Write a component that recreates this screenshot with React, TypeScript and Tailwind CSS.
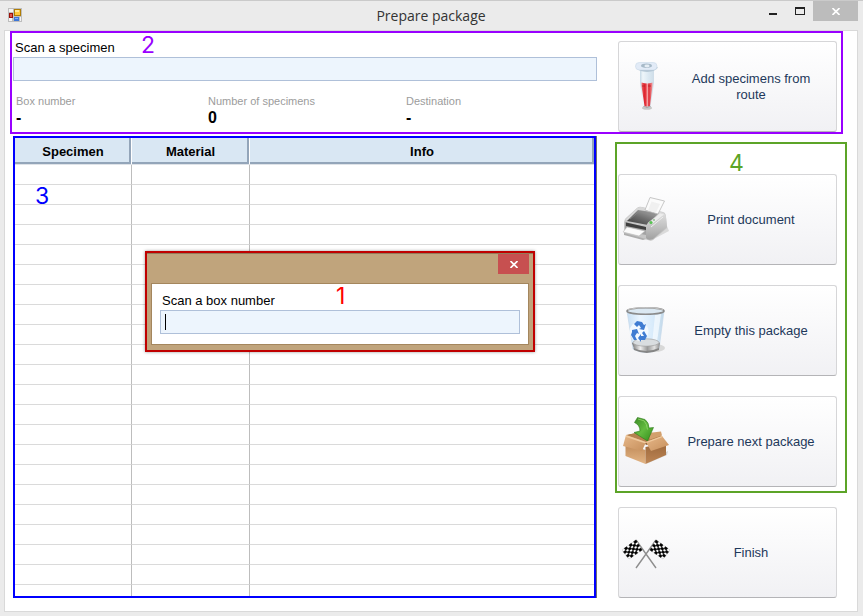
import type { ReactNode } from "react";

const ROWS = Array.from({ length: 21 }, (_, i) => i);

function FormIcon() {
  return (
    <svg width="14" height="14" viewBox="0 0 14 14" aria-hidden="true">
      <rect width="14" height="14" fill="#bdbdbd" />
      <rect x="1" y="1" width="4" height="3" fill="#f3f3f3" />
      <rect x="1" y="10" width="3" height="3" fill="#f6f6f6" />
      <rect x="12" y="9" width="1" height="4" fill="#f3f3f3" />
      <rect x="6.5" y="1.5" width="6" height="6" fill="#fdc93b" stroke="#b07d05" />
      <rect x="7" y="2" width="4" height="2" fill="#ffe79a" />
      <rect x="1.5" y="5.5" width="3" height="4" fill="#e2574c" stroke="#9b1109" />
      <rect x="6" y="9" width="5" height="4" fill="#3c76d8" />
      <rect x="7" y="10" width="3" height="1" fill="#86b0f5" />
    </svg>
  );
}

function TubeIcon() {
  return (
    <svg width="48" height="49" viewBox="0 0 48 49" className="shrink-0" aria-hidden="true">
      <defs>
        <linearGradient id="tubeGlass">
          <stop offset="0" stopColor="#c6d9e5" />
          <stop offset=".2" stopColor="#eef6fa" />
          <stop offset=".6" stopColor="#dbe9f2" />
          <stop offset="1" stopColor="#cfdde8" />
        </linearGradient>
        <linearGradient id="tubeRed">
          <stop offset="0" stopColor="#ee7474" />
          <stop offset=".25" stopColor="#de2530" />
          <stop offset=".42" stopColor="#e53a42" />
          <stop offset=".52" stopColor="#f9b9b9" />
          <stop offset=".66" stopColor="#dd2a34" />
          <stop offset="1" stopColor="#f09a9a" />
        </linearGradient>
      </defs>
      <ellipse cx="25" cy="46" rx="5" ry="1.8" fill="#c6c6c6" />
      <path d="M18 8h14v13l-3.500 24q-3.500 2-7 0L18 21z" fill="url(#tubeGlass)" />
      <path d="M19.500 20.500q6 2 11 0v3l-2.500 20.500q-3 1.500-5.500 0L19.500 24z" fill="url(#tubeRed)" />
      <path d="M21.500 44.500q3.500 1.800 7 0" fill="none" stroke="#999" />
      <path d="M20 24h3m3 0h3" stroke="#b51f27" strokeWidth=".8" />
      <path d="M14 5q0 2 5 4 6 1.500 12 0 5-2 4.500-4z" fill="#a9bdcc" />
      <rect x="13.500" y="0.500" width="21.500" height="7.500" rx="3.700" fill="#e2ebf7" stroke="#cfdce9" strokeWidth=".7" />
      <ellipse cx="24.500" cy="3.700" rx="5.500" ry="2.300" fill="#a7bac8" />
      <ellipse cx="25" cy="4" rx="2.600" ry="1.400" fill="#e5edf4" />
    </svg>
  );
}

function PrinterIcon() {
  return (
    <svg width="48" height="49" viewBox="0 0 48 49" className="shrink-0" aria-hidden="true">
      <defs>
        <linearGradient id="prTray" x1="0" y1="1" x2=".8" y2="0">
          <stop offset="0" stopColor="#3a3a3a" />
          <stop offset=".5" stopColor="#6c6c6c" />
          <stop offset="1" stopColor="#a9a9a9" />
        </linearGradient>
        <linearGradient id="prSide" x2="0" y2="1">
          <stop offset="0" stopColor="#dedede" />
          <stop offset=".5" stopColor="#c2c2c2" />
          <stop offset="1" stopColor="#a0a0a0" />
        </linearGradient>
      </defs>
      <path d="M28 46l19-10-2-5-17 8z" fill="#dadada" />
      <path d="M2 27q0-3 3-5l10-9q2-2 5-1l21 5q3 1 3 5l1 11-14 12q-2 1-5 0L2 39z" fill="#c6c6c6" />
      <path d="M3 25l12-12q2-1 4-1l24 6-14 10z" fill="#d8d8d8" />
      <path d="M5 26L16 15l21 3-11 12z" fill="url(#prTray)" />
      <path d="M8 24L17 16.500l16 3" fill="none" stroke="#8b8b8b" strokeWidth=".7" />
      <path d="M23 15L28 2.500 42.500 6 36 19z" fill="#fbfbfb" stroke="#b9b9b9" strokeWidth=".8" />
      <path d="M26 15.500l3.500-9L38 9l-4 8.500z" fill="#f0f0f0" />
      <path d="M24 35q0-7 4-9l10-8q6 0 6 4l1 10-14 12q-5 2-7-1z" fill="url(#prSide)" />
      <path d="M27 28l11-9.500 4 1L30 29z" fill="#ececec" />
      <path d="M29 32l12-10" stroke="#eee" />
      <path d="M3 27l21 5v8L3 36z" fill="#a3a3a3" />
      <path d="M4 27.500L24 32v3L4 31z" fill="#3f3f3f" />
      <path d="M5 32l18 4-6 5L1 37z" fill="#fbfbfb" stroke="#b3b3b3" strokeWidth=".5" />
      <path d="M2 38l22 6-3 1L2 40z" fill="#adadad" />
      <circle cx="29" cy="27.500" r="1.600" fill="#57c250" />
      <circle cx="32" cy="25" r=".9" fill="#86b986" />
    </svg>
  );
}

function BinIcon() {
  return (
    <svg width="48" height="49" viewBox="0 0 48 49" className="shrink-0" aria-hidden="true">
      <defs>
        <linearGradient id="binGlass">
          <stop offset="0" stopColor="#c8e0f5" />
          <stop offset=".35" stopColor="#eaf5ff" />
          <stop offset=".7" stopColor="#d8ebfb" />
          <stop offset="1" stopColor="#c2d8e9" />
        </linearGradient>
        <linearGradient id="binBase">
          <stop offset="0" stopColor="#777" />
          <stop offset=".3" stopColor="#eee" />
          <stop offset=".55" stopColor="#999" />
          <stop offset=".8" stopColor="#e1e1e1" />
          <stop offset="1" stopColor="#8b8b8b" />
        </linearGradient>
      </defs>
      <ellipse cx="33" cy="42" rx="10" ry="4" fill="#d8d8d8" />
      <path d="M5 5l6 38q13 7 26 0l5-38z" fill="url(#binGlass)" stroke="#c6d9e9" strokeWidth=".7" />
      <path d="M33 9l6-1-4 28-5 2z" fill="#f6fbff" opacity=".75" />
      <path d="M10 37q13-8 28 0l-1 6q-12 6-25 0z" fill="url(#binBase)" />
      <ellipse cx="24" cy="36.500" rx="13" ry="3.700" fill="#d9dde0" stroke="#999" strokeWidth=".6" />
      <path d="M11.500 42q12 6 25.500 0v2q-12 6-25 0z" fill="#858585" />
      <circle cx="17" cy="25.500" r="9.500" fill="#f4faff" opacity=".9" />
      <g fill="#3f7cd2">
        <path d="M12 18l3-3 5 1 2 3 2-1-2 6-5-1 2-1-2-3-2 2z" />
        <path d="M10 24l5-1 2 5-2-1-2 3 2 4h-3l-3-5 1-3z" />
        <path d="M22 25l3 5-2 4h-4v2l-3-4 3-4v2h3l-2-3z" />
      </g>
      <ellipse cx="23.500" cy="5" rx="18.500" ry="3.200" fill="#dbe8f2" stroke="#8b8b8b" strokeWidth="1.600" />
      <path d="M6 3.500q17-4 35 0" fill="none" stroke="#ddd" strokeWidth=".7" />
    </svg>
  );
}

function BoxIcon() {
  return (
    <svg width="48" height="49" viewBox="0 0 48 49" className="shrink-0" aria-hidden="true">
      <defs>
        <linearGradient id="boxLeft" x2="0" y2="1">
          <stop offset="0" stopColor="#c08a58" />
          <stop offset="1" stopColor="#e3b585" />
        </linearGradient>
        <linearGradient id="boxRight" x2="0" y2="1">
          <stop offset="0" stopColor="#9c673b" />
          <stop offset="1" stopColor="#bd8655" />
        </linearGradient>
        <linearGradient id="boxFlap" x2="1" y2="1">
          <stop offset="0" stopColor="#e6b788" />
          <stop offset="1" stopColor="#c68f5c" />
        </linearGradient>
        <linearGradient id="arrowGreen" x2="1" y2="1">
          <stop offset="0" stopColor="#3b8a26" />
          <stop offset=".5" stopColor="#63bb3f" />
          <stop offset="1" stopColor="#2f8a1a" />
        </linearGradient>
      </defs>
      <path d="M24 47l21-9 1-4-8 4z" fill="#d4d4d4" />
      <path d="M4 18.500l8-2 28 2.500-15 9z" fill="#8a5a31" />
      <path d="M4 18l10-2 26 3-2 4-14 3z" fill="#b5804f" />
      <path d="M26 16l13-1.500 1 4-12 4z" fill="#d3a06d" />
      <path d="M15.500 .500L23 2.500q4 3 4 8.500l4.500-.5L25.500 24 12 15.500l6-1.500q0-6-5.500-8.500z" fill="url(#arrowGreen)" stroke="#2b7a18" strokeWidth=".6" />
      <path d="M16 2l6 1.800q3 3 3.500 8.700" fill="none" stroke="#8fd26a" strokeWidth=".9" />
      <path d="M3.500 27l20 6v14l-20-8z" fill="url(#boxLeft)" />
      <path d="M23.500 30L44 26v12l-20.500 9z" fill="url(#boxRight)" />
      <path d="M4 18l20 7-4 9L1 29z" fill="url(#boxFlap)" />
      <path d="M4 18l20 7-.5 1.500L4 20z" fill="#efc99e" />
      <path d="M24 25l16-6 7 9-18 6z" fill="url(#boxFlap)" />
      <path d="M24 25l16-6 .8 1-16 6z" fill="#efc99e" />
    </svg>
  );
}

type Point = [number, number];

/* Splits a four-cornered flag into a 6 by 5 chequered grid. */
function checker([a, b, c, d]: Point[]) {
  const at = (u: number, v: number) =>
    [0, 1]
      .map((k) => (1 - u) * (1 - v) * a[k] + u * (1 - v) * b[k] + u * v * c[k] + (1 - u) * v * d[k])
      .join(",");
  const cells: string[] = [];
  for (let i = 0; i < 6; i++) {
    for (let j = 0; j < 5; j++) {
      if ((i + j) % 2 === 0) {
        cells.push([at(i / 6, j / 5), at((i + 1) / 6, j / 5), at((i + 1) / 6, (j + 1) / 5), at(i / 6, (j + 1) / 5)].join(" "));
      }
    }
  }
  return cells;
}

function FlagsIcon() {
  const left: Point[] = [[14, 12], [0, 22], [7, 31], [20, 22]];
  const right: Point[] = [[34, 12], [48, 22], [41, 31], [28, 22]];
  return (
    <svg width="48" height="49" viewBox="0 0 48 49" className="shrink-0" aria-hidden="true">
      <path d="M14 12l20 28M34 12L14 40" stroke="#8e8e8e" strokeWidth="1.400" />
      {[left, right].map((flag, i) => (
        <g key={i}>
          <polygon points={flag.map((p) => p.join(",")).join(" ")} fill="#fff" stroke="#aaa" strokeWidth=".4" />
          {checker(flag).map((points) => (
            <polygon key={points} points={points} fill="#000" stroke="#000" strokeWidth=".5" />
          ))}
        </g>
      ))}
    </svg>
  );
}

function ActionButton({ icon, children }: { icon: ReactNode; children: ReactNode }) {
  return (
    <button
      type="button"
      className="flex h-[91px] w-full items-center rounded-[3px] border border-[#d6d6d8] border-b-[#b4b4b7] bg-linear-to-b from-white to-[#f1f1f4] pr-1 pl-[3px] text-[13px] leading-4 text-[#1e395b]"
    >
      {icon}
      <span className="flex-1 px-4">{children}</span>
    </button>
  );
}

function Mark({ className, children }: { className: string; children: ReactNode }) {
  return (
    <span className={`pointer-events-none absolute font-['Inter',sans-serif] text-[23px] leading-6 font-normal ${className}`}>
      {children}
    </span>
  );
}

function Stat({ label, value, className }: { label: string; value: string; className: string }) {
  return (
    <div className={className}>
      <dt className="text-[11px] leading-4 text-[#9c9c9c]">{label}</dt>
      <dd className="text-base leading-[18px] font-bold">{value}</dd>
    </div>
  );
}

function ColumnHead({ className, children }: { className: string; children: ReactNode }) {
  return (
    <th className={`h-[27px] border-b border-[#dfe3e8] p-0 ${className}`}>
      <div className="h-[26px] border-r-2 border-b-2 border-[#93a5b9] bg-[#d9e7f3] pl-[2px] text-[13px] leading-7">
        {children}
      </div>
    </th>
  );
}

export default function App() {
  return (
    <div className="relative flex min-h-screen flex-col border-t border-[#cacaca] bg-[#ebebeb] pb-1 font-['Liberation_Sans',Arial,sans-serif] text-black">
      <header className="grid h-[29px] shrink-0 grid-cols-[1fr_auto_1fr] items-start pr-[5px] pl-1">
        <div className="pt-[7px] pl-1">
          <FormIcon />
        </div>
        <h1 className="font-['Open_Sans',sans-serif] text-[14px] leading-[30px] text-[#333]">Prepare package</h1>
        <div className="flex justify-end">
          <button type="button" aria-label="Minimize" className="flex h-5 w-7 items-center justify-center pt-[6px]">
            <span className="h-[2px] w-2 bg-[#222]" />
          </button>
          <button type="button" aria-label="Maximize" className="flex h-5 w-[26px] items-center justify-center">
            <span className="h-2 w-[10px] border border-t-2 border-[#222]" />
          </button>
          <button type="button" aria-label="Close" className="flex h-5 w-[45px] items-center justify-center bg-[#bcbcbc]">
            <svg width="8" height="7" viewBox="0 0 8 7" aria-hidden="true">
              <path d="M.5 0l7 7M7.500 0l-7 7" stroke="#fff" strokeWidth="1.600" />
            </svg>
          </button>
        </div>
      </header>

      <main className="mr-[5px] ml-1 flex flex-1 flex-col border border-[#d9d9d9] bg-white">
        <section className="relative mr-[14px] ml-[5px] flex h-[103px] border-2 border-[#9900ff]">
          <Mark className="top-0 left-[129px] text-[#9900ff]">2</Mark>
          <div className="mr-[21px] flex-1 pl-px">
            <label htmlFor="specimen" className="mt-[6px] block h-[18px] pl-[2px] text-[13px] leading-[18px]">
              Scan a specimen
            </label>
            <input id="specimen" type="text" className="block h-6 w-full border border-[#afc0d9] bg-[#edf5fd] px-1 text-[13px] outline-none" />
            <dl className="mt-3 flex pl-[3px]">
              <Stat label="Box number" value="-" className="w-[192px]" />
              <Stat label="Number of specimens" value="0" className="w-[198px]" />
              <Stat label="Destination" value="-" className="flex-1" />
            </dl>
          </div>
          <div className="mr-1 w-[219px] pt-2">
            <ActionButton icon={<TubeIcon />}>Add specimens from route</ActionButton>
          </div>
        </section>

        <div className="mt-[2px] flex flex-1 pr-[10px] pb-[13px] pl-2">
          <section className="relative mr-[19px] flex flex-1 flex-col border-2 border-[#0000ff] shadow-[1px_0_0_#707070]">
            <Mark className="top-[46px] left-[20px] text-[#0000ff]">3</Mark>
            <table className="w-full table-fixed border-separate border-spacing-0">
              <thead>
                <tr>
                  <ColumnHead className="w-[117px] pr-px">Specimen</ColumnHead>
                  <ColumnHead className="w-[118px] pr-px">Material</ColumnHead>
                  <ColumnHead className="">Info</ColumnHead>
                </tr>
              </thead>
              <tbody>
                {ROWS.map((row) => (
                  <tr key={row} className="h-5">
                    <td className="border-r border-b border-r-[#bdbdbd] border-b-[#dadada] p-0" />
                    <td className="border-r border-b border-r-[#bdbdbd] border-b-[#dadada] p-0" />
                    <td className="border-b border-[#dadada] p-0" />
                  </tr>
                ))}
              </tbody>
            </table>
            <div className="flex flex-1">
              <div className="w-[117px] border-r border-[#bdbdbd]" />
              <div className="w-[118px] border-r border-[#bdbdbd]" />
            </div>
          </section>

          <aside className="w-[232px] shrink-0 pt-[6px]">
            <div className="relative flex flex-col gap-5 border-2 border-[#5ca428] pt-[30px] pr-2 pb-1 pl-px">
              <Mark className="top-[7px] left-[112px] text-[#5ca428]">4</Mark>
              <ActionButton icon={<PrinterIcon />}>Print document</ActionButton>
              <ActionButton icon={<BinIcon />}>Empty this package</ActionButton>
              <ActionButton icon={<BoxIcon />}>Prepare next package</ActionButton>
            </div>
            <div className="mt-[14px] pr-[10px] pl-[3px]">
              <ActionButton icon={<FlagsIcon />}>Finish</ActionButton>
            </div>
          </aside>
        </div>
      </main>

      <div
        role="dialog"
        aria-label="Scan a box number"
        className="absolute top-[250px] left-[145px] w-[390px] border-2 border-[#c00000] bg-[#c0a47c] shadow-[0_0_3px_#0006]"
      >
        <div className="flex h-[30px] justify-end border-t border-[#927b5a] pr-1">
          <button type="button" aria-label="Close dialog" className="flex h-5 w-[31px] items-center justify-center bg-[#c75050]">
            <svg width="8" height="7" viewBox="0 0 8 7" aria-hidden="true">
              <path d="M.5 0l7 7M7.500 0l-7 7" stroke="#fff" strokeWidth="1.600" />
            </svg>
          </button>
        </div>
        <div className="relative mx-1 mb-[5px] border border-[#a4865d] bg-white px-2 pt-2 pb-[10px]">
          <Mark className="top-0 left-[184px] text-[#ff0000]">1</Mark>
          <label htmlFor="box" className="block h-[18px] pl-[2px] text-[13px] leading-[18px]">
            Scan a box number
          </label>
          <div className="relative">
            <input id="box" type="text" className="block h-6 w-full border border-[#afc0d9] bg-[#edf5fd] px-1 text-[13px] outline-none" />
            <span className="absolute top-1 left-[5px] h-4 w-px bg-black" />
          </div>
        </div>
      </div>
    </div>
  );
}
